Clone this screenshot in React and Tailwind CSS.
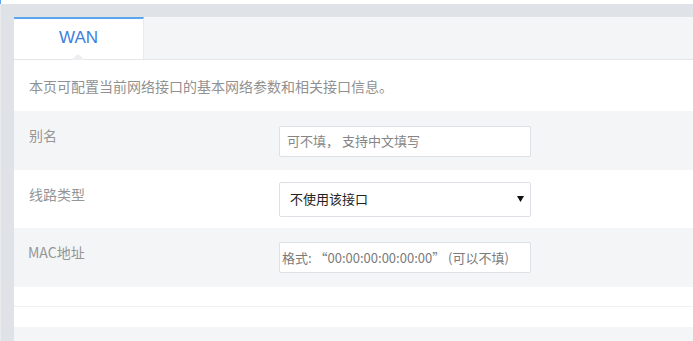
import React from "react";

const cjk = { fontFamily: '"Microsoft YaHei", "Noto Sans CJK SC", "Liberation Sans", sans-serif' };

function Row({ label, gray, children, h }) {
  return (
    <div className={`flex ${h} ${gray ? "bg-[#f4f5f7]" : "bg-white"}`}>
      <div className="w-[265px] pl-[15px] pt-[14px] text-[14px] leading-[20px] text-[#959595]">{label}</div>
      <div className="flex items-center">{children}</div>
    </div>
  );
}

export default function App() {
  return (
    <div className="w-[693px] h-[341px] overflow-hidden bg-[#dfe2e6]" style={cjk}>
      <div className="h-[4px] bg-white flex">
        <div className="w-[1px] bg-[#5aa6ee]" />
      </div>
      <div className="flex h-[337px]">
        <div className="w-[14px] shrink-0 border-l border-[#e8ebee]" />
        <div className="flex-1 mt-[13px] bg-white flex flex-col">
          <div className="h-[43px] bg-[#f4f5f7] border-b border-[#e3e5e8] flex shrink-0">
            <div className="relative w-[130px] bg-white border-t-2 border-[#5aa6ee] border-r border-r-[#e8eaed] flex items-center justify-center">
              <span className="text-[17px] text-[#3d7ede] -mt-[3px]" style={{ fontFamily: '"Liberation Sans", Arial, sans-serif' }}>WAN</span>
              <div className="absolute left-[57px] -bottom-[1px] w-0 h-0 border-l-[7px] border-r-[7px] border-b-[6px] border-l-transparent border-r-transparent border-b-[#eceef1]" />
            </div>
          </div>
          <div className="h-[51px] pl-[15px] pt-[16px] text-[14px] leading-[20px] text-[#919191] shrink-0">
            本页可配置当前网络接口的基本网络参数和相关接口信息。
          </div>
          <Row label="别名" gray h="h-[59px]">
            <div className="w-[252px] h-[31px] mt-[1px] bg-white border border-[#dde1e6] rounded-[2px] flex items-center pl-[7px] text-[13px] text-[#858585]">
              可不填， 支持中文填写
            </div>
          </Row>
          <Row label="线路类型" h="h-[58px]">
            <div className="w-[252px] h-[35px] bg-white border border-[#dde1e6] rounded-[2px] flex items-center justify-between pl-[10px] pr-[6px] text-[13px] text-[#222]">
              <span>不使用该接口</span>
              <svg width="7" height="6" viewBox="0 0 7 6"><path d="M0 0H7L3.5 6Z" fill="#111" /></svg>
            </div>
          </Row>
          <Row label={<span className="relative -left-[1px]">MAC地址</span>} gray h="h-[59px]">
            <div className="w-[252px] h-[31px] bg-white border border-[#dde1e6] rounded-[2px] flex items-center pl-[2px] text-[13px] text-[#7a7a7a] whitespace-nowrap overflow-hidden">
              格式: “00:00:00:00:00:00” (可以不填)
            </div>
          </Row>
          <div className="h-[20px] bg-white border-b border-[#f0f1f3] shrink-0" />
          <div className="h-[20px] bg-white shrink-0" />
          <div className="flex-1 bg-[#f4f5f7]" />
        </div>
      </div>
    </div>
  );
}
